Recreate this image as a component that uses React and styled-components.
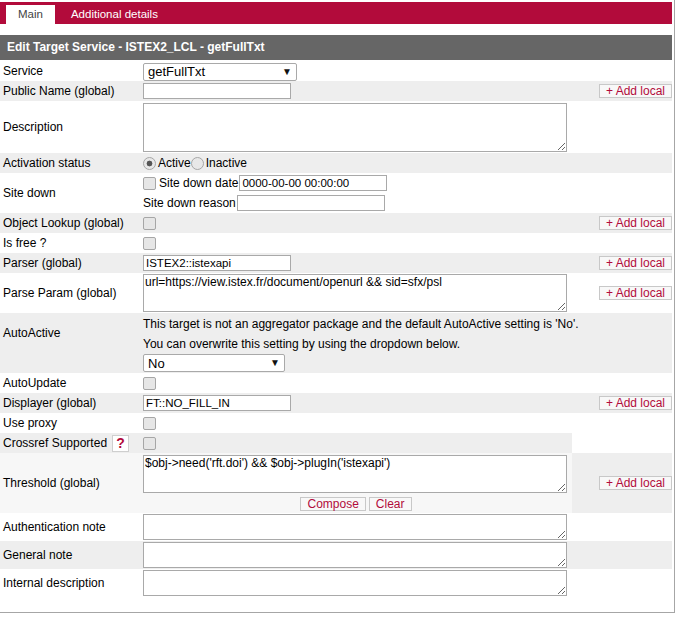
import React from 'react';
import styled, { createGlobalStyle } from 'styled-components';

const RED = '#b20b3b';
const GRAY = '#eeeeee';
const LIGHT = '#f7f7f7';

const Global = createGlobalStyle`
  html, body { margin: 0; padding: 0; background: #fff; }
  body {
    font-family: "Liberation Sans", Arial, sans-serif;
    font-size: 12px;
    color: #000;
  }
  * { box-sizing: border-box; }
`;

const Frame = styled.div`
  width: 675px;
  height: 613px;
  padding: 2px 2px 0 0;
  border-right: 1px solid #a6a6a6;
  border-bottom: 1px solid #a6a6a6;
`;

const TabBar = styled.div`
  height: 22px;
  background: ${RED};
  display: flex;
  align-items: flex-end;
  padding-left: 6px;
  gap: 4px;
  margin-bottom: 11px;
`;

const Tab = styled.div`
  height: 19px;
  line-height: 19px;
  padding: 0 12px;
  font-size: 11.5px;
  color: ${(p) => (p.$active ? '#444' : '#fff')};
  background: ${(p) => (p.$active ? '#fff' : 'transparent')};
`;

const Header = styled.div`
  height: 25px;
  line-height: 25px;
  background: #666;
  color: #fff;
  font-weight: bold;
  font-size: 12px;
  padding-left: 7px;
`;

const Row = styled.div`
  display: grid;
  grid-template-columns: 140px 432px 100px;
  height: ${(p) => p.$h || 20}px;
  background: ${(p) => p.$bg || '#fff'};
`;

const Label = styled.div`
  display: flex;
  align-items: center;
  gap: 5px;
  padding-left: 3px;
  padding-bottom: ${(p) => p.$raise || 0}px;
  white-space: nowrap;
`;

const Value = styled.div`
  display: flex;
  flex-direction: ${(p) => (p.$col ? 'column' : 'row')};
  align-items: ${(p) => (p.$col ? 'flex-start' : 'center')};
  justify-content: ${(p) => p.$justify || (p.$col ? 'center' : 'flex-start')};
  gap: ${(p) => p.$gap || 0}px;
  padding-left: 3px;
  padding-top: ${(p) => p.$pt || 0}px;
  grid-column: ${(p) => (p.$wide ? 'span 2' : 'auto')};
  white-space: nowrap;
`;

const Action = styled.div`
  display: flex;
  justify-content: flex-end;
  align-items: center;
  background: ${(p) => p.$bg || 'transparent'};
`;

const Line = styled.div`
  display: flex;
  align-items: center;
  height: 16px;
  gap: ${(p) => p.$gap || 0}px;
`;

const Caption = styled.span`
  margin-left: ${(p) => p.$ml || 0}px;
  margin-right: ${(p) => p.$mr || 0}px;
`;

const TextLine = styled.div`
  height: 20px;
  line-height: 20px;
`;

const TextInput = styled.input`
  width: 148px;
  height: 16px;
  margin: 0;
  padding: 0 2px;
  border: 1px solid #a9a9a9;
  font-family: "Liberation Sans", Arial, sans-serif;
  font-size: 11.5px;
  color: #000;
  background: #fff;
`;

const TextArea = styled.textarea`
  width: 424px;
  height: ${(p) => p.$h || 26}px;
  margin: 0;
  padding: 0 1px;
  border: 1px solid #a9a9a9;
  font-family: "Liberation Sans", Arial, sans-serif;
  font-size: 12px;
  line-height: 14px;
  color: #000;
  background: #fff;
  resize: both;
`;

const SelectWrap = styled.span`
  position: relative;
  display: inline-block;
  width: ${(p) => p.$w}px;
  height: 18px;
`;

const Select = styled.select`
  appearance: none;
  width: 100%;
  height: 100%;
  margin: 0;
  padding: 0 4px;
  border: 1px solid #a9a9a9;
  border-radius: 2px;
  background: #fff;
  font-family: "Liberation Sans", Arial, sans-serif;
  font-size: 13px;
  color: #000;
`;

const Arrow = styled.span`
  position: absolute;
  right: 5px;
  top: 3px;
  font-size: 10px;
  line-height: 12px;
  color: #111;
  pointer-events: none;
`;

const Check = styled.input.attrs({ type: 'checkbox', disabled: true })`
  appearance: none;
  width: 13px;
  height: 13px;
  margin: 0;
  border: 1px solid #a6a6a6;
  border-radius: 2px;
  background: #e6e6e6;
`;

const Radio = styled.input.attrs({ type: 'radio', disabled: true })`
  appearance: none;
  width: 13px;
  height: 13px;
  margin: 0 2px 0 0;
  border: 1px solid #a6a6a6;
  border-radius: 50%;
  background: ${(p) =>
    p.checked
      ? 'radial-gradient(circle, #555 0 2.6px, #e8e8e8 3.2px)'
      : '#e8e8e8'};
`;

const Btn = styled.button`
  height: 14px;
  margin: 0;
  padding: 0 6px;
  border: 1px solid #c8c8c8;
  background: #f8f8f8;
  color: ${RED};
  font-family: "Liberation Sans", Arial, sans-serif;
  font-size: 12px;
  line-height: 12px;
  white-space: nowrap;
`;

const HelpBtn = styled.button`
  width: 17px;
  height: 17px;
  margin: 0;
  padding: 0;
  border: 1px solid #cfcfcf;
  background: #fff;
  color: ${RED};
  font-family: "Liberation Sans", Arial, sans-serif;
  font-weight: bold;
  font-size: 14px;
  line-height: 15px;
`;

const Buttons = styled.div`
  align-self: center;
  display: flex;
  gap: 3px;
  margin-left: -3px;
`;

const Form = styled.div`
  display: flex;
  flex-direction: column;
`;

const AddLocal = () => <Btn>+ Add local</Btn>;

export default function App() {
  return (
    <>
      <Global />
      <Frame>
        <TabBar>
          <Tab $active>Main</Tab>
          <Tab>Additional details</Tab>
        </TabBar>
        <Header>Edit Target Service - ISTEX2_LCL - getFullTxt</Header>
        <Form>
          <Row $h={21}>
            <Label>Service</Label>
            <Value $pt={2}>
              <SelectWrap $w={154}>
                <Select defaultValue="getFullTxt">
                  <option>getFullTxt</option>
                </Select>
                <Arrow>▼</Arrow>
              </SelectWrap>
            </Value>
            <Action />
          </Row>
          <Row $bg={GRAY}>
            <Label>Public Name (global)</Label>
            <Value><TextInput defaultValue="" /></Value>
            <Action><AddLocal /></Action>
          </Row>
          <Row $h={52}>
            <Label>Description</Label>
            <Value><TextArea $h={49} defaultValue="" /></Value>
            <Action />
          </Row>
          <Row $bg={GRAY}>
            <Label>Activation status</Label>
            <Value>
              <Radio name="act" checked readOnly />Active
              <Radio name="act" readOnly />Inactive
            </Value>
            <Action />
          </Row>
          <Row $h={40}>
            <Label>Site down</Label>
            <Value $col $gap={4}>
              <Line>
                <Check />
                <Caption $ml={3} $mr={1}>Site down date</Caption>
                <TextInput defaultValue="0000-00-00 00:00:00" />
              </Line>
              <Line $gap={1}>
                <Caption>Site down reason</Caption>
                <TextInput defaultValue="" />
              </Line>
            </Value>
            <Action />
          </Row>
          <Row $bg={GRAY}>
            <Label>Object Lookup (global)</Label>
            <Value><Check /></Value>
            <Action><AddLocal /></Action>
          </Row>
          <Row>
            <Label>Is free ?</Label>
            <Value><Check /></Value>
            <Action />
          </Row>
          <Row $bg={GRAY}>
            <Label>Parser (global)</Label>
            <Value><TextInput defaultValue="ISTEX2::istexapi" /></Value>
            <Action><AddLocal /></Action>
          </Row>
          <Row $h={40}>
            <Label>Parse Param (global)</Label>
            <Value>
              <TextArea $h={38} defaultValue="url=https://view.istex.fr/document/openurl && sid=sfx/psl" />
            </Value>
            <Action><AddLocal /></Action>
          </Row>
          <Row $h={60} $bg={GRAY}>
            <Label $raise={20}>AutoActive</Label>
            <Value $wide $col>
              <TextLine>This target is not an aggregator package and the default AutoActive setting is 'No'.</TextLine>
              <TextLine>You can overwrite this setting by using the dropdown below.</TextLine>
              <SelectWrap $w={142}>
                <Select defaultValue="No">
                  <option>No</option>
                </Select>
                <Arrow>▼</Arrow>
              </SelectWrap>
            </Value>
          </Row>
          <Row>
            <Label>AutoUpdate</Label>
            <Value><Check /></Value>
            <Action />
          </Row>
          <Row $bg={GRAY}>
            <Label>Displayer (global)</Label>
            <Value><TextInput defaultValue="FT::NO_FILL_IN" /></Value>
            <Action><AddLocal /></Action>
          </Row>
          <Row>
            <Label>Use proxy</Label>
            <Value><Check /></Value>
            <Action />
          </Row>
          <Row $bg={GRAY}>
            <Label>Crossref Supported<HelpBtn>?</HelpBtn></Label>
            <Value><Check /></Value>
            <Action $bg="#fff" />
          </Row>
          <Row $h={60} $bg={LIGHT}>
            <Label>Threshold (global)</Label>
            <Value $col $gap={4} $justify="flex-start" $pt={2}>
              <TextArea $h={38} defaultValue="$obj->need('rft.doi') && $obj->plugIn('istexapi')" />
              <Buttons>
                <Btn>Compose</Btn>
                <Btn>Clear</Btn>
              </Buttons>
            </Value>
            <Action $bg={GRAY}><AddLocal /></Action>
          </Row>
          <Row $h={28}>
            <Label>Authentication note</Label>
            <Value><TextArea $h={26} defaultValue="" /></Value>
            <Action />
          </Row>
          <Row $h={28} $bg={GRAY}>
            <Label>General note</Label>
            <Value><TextArea $h={26} defaultValue="" /></Value>
            <Action />
          </Row>
          <Row $h={28}>
            <Label>Internal description</Label>
            <Value><TextArea $h={26} defaultValue="" /></Value>
            <Action />
          </Row>
        </Form>
      </Frame>
    </>
  );
}
